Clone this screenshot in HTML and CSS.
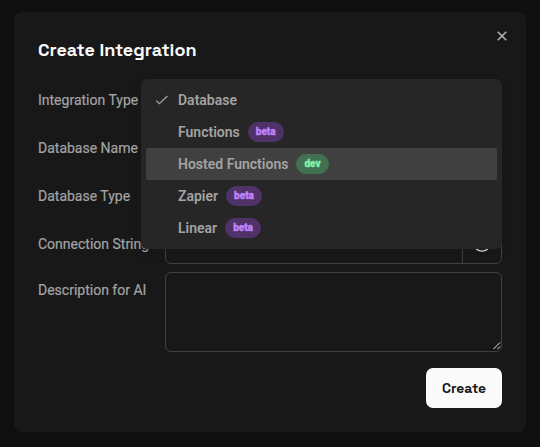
FILE: index.html
```html
<!DOCTYPE html>
<html lang="en">
<head>
<meta charset="utf-8">
<title>Create Integration</title>
<link rel="stylesheet" href="styles.css">
</head>
<body>
<main class="dialog">
  <button class="close" aria-label="Close"><svg width="16" height="16" viewBox="0 0 16 16"><path d="M3.7 3.7l8.6 8.6M12.3 3.7l-8.6 8.6"/></svg></button>
  <h1 class="title"><span>Create Integration</span></h1>
  <form class="form">
    <div class="row"><label class="label">Integration Type</label>
      <div class="menu">
        <div class="item"><svg class="check" width="16" height="16" viewBox="0 0 16 16"><path d="M2.2 8.6l3.2 3.1 8-7.7"/></svg><span>Database</span></div>
        <div class="item"><span>Functions</span><span class="badge">beta</span></div>
        <div class="item active"><span>Hosted Functions</span><span class="badge dev">dev</span></div>
        <div class="item"><span>Zapier</span><span class="badge">beta</span></div>
        <div class="item"><span>Linear</span><span class="badge">beta</span></div>
      </div>
    </div>
    <div class="row"><label class="label">Database Name</label></div>
    <div class="row"><label class="label">Database Type</label></div>
    <div class="row"><label class="label">Connection String</label>
      <div class="field"><div class="value"></div><div class="reveal"><svg width="20" height="20" viewBox="0 0 20 20"><path d="M1 10c4-9.5 14-9.5 18 0-4 9.5-14 9.5-18 0z"/><circle cx="10" cy="10" r="2.5"/></svg></div></div>
    </div>
    <div class="row tall"><label class="label">Description for AI</label>
      <div class="textarea"><svg class="grip" width="8" height="8" viewBox="0 0 8 8"><path d="M.5 7L7 .5M4.5 7L7 4.5"/></svg></div>
    </div>
  </form>
  <button class="create"><span>Create</span></button>
</main>
</body>
</html>
```
FILE: styles.css
```css
* { box-sizing: border-box; }
body {
  margin: 0;
  height: 447px;
  padding: 12px 14px;
  overflow: hidden;
  background: #0f0f0f;
  font: 14px/20px Roboto, "Liberation Sans", sans-serif;
}
svg { fill: none; stroke: currentColor; display: block; }
.dialog {
  position: relative;
  display: flex;
  flex-direction: column;
  height: 420px;
  padding: 24px;
  border-radius: 8px;
  background: #181818;
  color: #a3a3a3;
}
.close {
  position: absolute;
  top: 16px;
  right: 16px;
  padding: 0;
  border: 0;
  background: none;
  color: #b4b4b4;
}
.close svg { stroke-width: 1.5; }
.title {
  margin: 0 0 16px;
  height: 28px;
  color: #fafafa;
  font: 700 18px/28px "Space Grotesk", Inter, sans-serif;
}
.form { display: flex; flex-direction: column; gap: 8px; }
.row { position: relative; display: flex; align-items: center; height: 40px; }
.label { flex: 0 0 127px; white-space: nowrap; -webkit-text-stroke: .2px currentColor; }
.tall { height: 80px; align-items: flex-start; }
.tall .label { padding-top: 8px; }
.menu {
  position: absolute;
  z-index: 2;
  top: -1px;
  left: 103px;
  right: 0;
  padding: 5px;
  border-radius: 6px;
  background: #262626;
  box-shadow: 0 4px 10px rgba(0, 0, 0, .12);
  font-weight: 600;
}
.item {
  position: relative;
  display: flex;
  align-items: center;
  gap: 8px;
  height: 32px;
  padding-left: 32px;
  border-radius: 2px;
}
.active { background: #404040; }
.check { position: absolute; left: 8px; top: 8px; stroke-width: 1.3; }
.badge {
  height: 20px;
  padding: 0 8px;
  border-radius: 10px;
  background: #4f3268;
  color: #c084fc;
  font-size: 10px;
  line-height: 19px;
  font-weight: 800;
  -webkit-text-stroke: .4px currentColor;
}
.dev { background: #417052; color: #86efac; }
.field, .textarea {
  flex: 1;
  height: 100%;
  border: 1px solid #404040;
  border-radius: 6px;
}
.field { display: flex; }
.value { flex: 1; }
.reveal {
  display: grid;
  place-items: center;
  width: 39px;
  border-left: 1px solid #404040;
  color: #e5e5e5;
}
.reveal svg { stroke-width: 1.3; }
.textarea { display: flex; align-items: flex-end; justify-content: flex-end; padding: 1px 0; }
.grip { stroke: #e5e5e5; stroke-width: 1; }
.create {
  align-self: flex-end;
  width: 76px;
  height: 40px;
  margin-top: 16px;
  padding: 0;
  border: 0;
  border-radius: 7px;
  background: #fafafa;
  color: #181818;
  font: 600 14px/20px "Space Grotesk", Inter, sans-serif;
}
```
